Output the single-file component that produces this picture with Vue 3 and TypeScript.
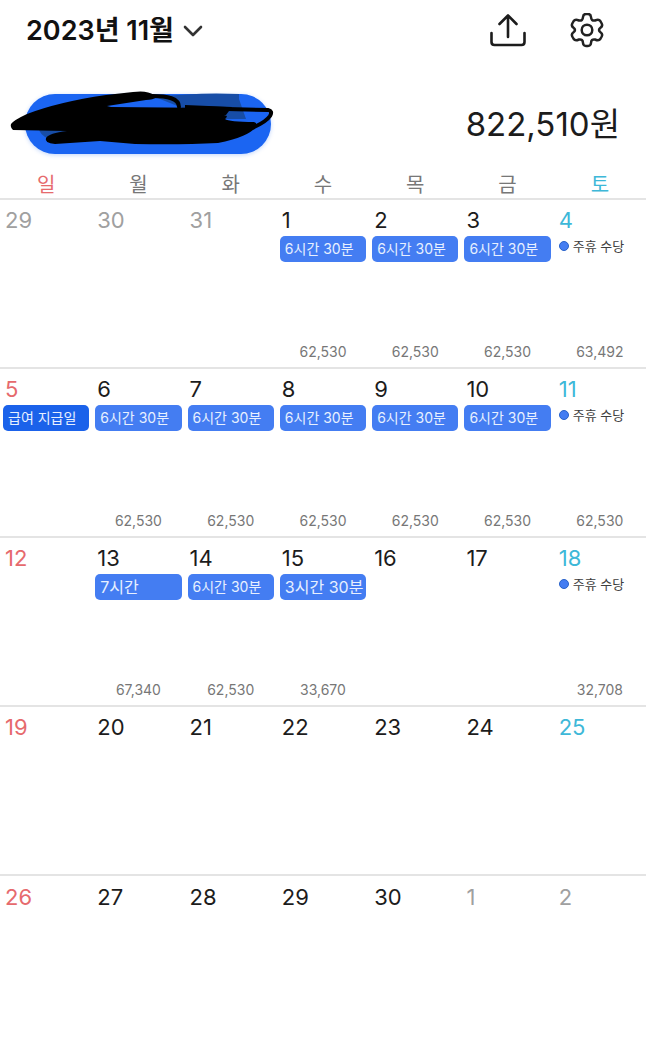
<script setup lang="ts">
interface Day {
  date: number
  outside?: boolean
  work?: string
  large?: boolean
  payday?: boolean
  holiday?: boolean
  amount?: string
}

const weekdays: string[] = ['일', '월', '화', '수', '목', '금', '토']
const shift = '6시간 30분'
const pay = '62,530'

const weeks: Day[][] = [
  [
    { date: 29, outside: true },
    { date: 30, outside: true },
    { date: 31, outside: true },
    { date: 1, work: shift, amount: pay },
    { date: 2, work: shift, amount: pay },
    { date: 3, work: shift, amount: pay },
    { date: 4, holiday: true, amount: '63,492' },
  ],
  [
    { date: 5, work: '급여 지급일', payday: true },
    { date: 6, work: shift, amount: pay },
    { date: 7, work: shift, amount: pay },
    { date: 8, work: shift, amount: pay },
    { date: 9, work: shift, amount: pay },
    { date: 10, work: shift, amount: pay },
    { date: 11, holiday: true, amount: pay },
  ],
  [
    { date: 12 },
    { date: 13, work: '7시간', large: true, amount: '67,340' },
    { date: 14, work: shift, amount: pay },
    { date: 15, work: '3시간 30분', large: true, amount: '33,670' },
    { date: 16 },
    { date: 17 },
    { date: 18, holiday: true, amount: '32,708' },
  ],
  [19, 20, 21, 22, 23, 24, 25].map((date) => ({ date })),
  [26, 27, 28, 29, 30, 1, 2].map((date) => ({ date, outside: date < 3 })),
]
</script>

<template>
  <main class="page">
    <header class="topbar">
      <button class="month" type="button">
        <span>2023년 11월</span>
        <svg width="20" height="14" viewBox="0 0 20 14" aria-hidden="true">
          <path d="M2 3 10 11 18 3" fill="none" stroke="#333" stroke-width="2.6" stroke-linecap="round" stroke-linejoin="round" />
        </svg>
      </button>
      <div class="actions">
        <button class="icon" type="button" aria-label="공유">
          <svg width="38" height="36" viewBox="0 0 38 36" aria-hidden="true">
            <g fill="none" stroke="#1c1c1c" stroke-width="2.6" stroke-linecap="round" stroke-linejoin="round">
              <path d="M19 24V2.500M10.5 11 19 2.500 27.500 11" />
              <path d="M2.500 20V29Q2.500 32 5.500 32H32.500Q35.500 32 35.500 29V20" />
            </g>
          </svg>
        </button>
        <button class="icon" type="button" aria-label="설정">
          <svg width="34" height="36" viewBox="0 1 34 36" aria-hidden="true">
            <g fill="none" stroke="#222" stroke-width="2.5" stroke-linejoin="round">
              <path d="M13 5Q13.300 2 16 2H18Q20.700 2 21 5Q21.200 9.200 25 8.500Q28.800 6.800 30.300 9L31.700 11.500Q33 14 30.500 15.700Q27.500 18 30.500 20.300Q33 22 31.700 24.500L30.300 27Q28.800 29.200 25 27.500Q21.200 26.800 21 31Q20.700 34 18 34H16Q13.300 34 13 31Q12.800 26.800 9 27.500Q5.200 29.200 3.700 27L2.300 24.500Q1 22 3.500 20.300Q6.500 18 3.500 15.700Q1 14 2.300 11.500L3.700 9Q5.200 6.800 9 8.500Q12.800 9.200 13 5Z" />
              <circle cx="17" cy="18" r="5.300" />
            </g>
          </svg>
        </button>
      </div>
    </header>

    <section class="summary">
      <div class="workplace">
        <svg class="scribble" width="264" height="56" viewBox="0 0 264 56" aria-hidden="true">
          <path d="M145 6Q190 1 229 3V8L236 28 200 28Z" fill="#174da7" />
          <path d="M28 35H60V47H38Q30 45 28 35Z" fill="#174da7" />
          <path d="M1 33Q4 29 17 23Q48 11 96 4L123 1Q137-1 144 4L147 6Q143 9 136 9L97 15 101 16 211 17V23L217 25Q216 28 215 28 219 31 244 31L246 32 246 36Q238 46 208 52 170 54 125 53L90 50 45 53Q34 52 36 47 39 42 57 40L3 39Q0 36 1 33Z" fill="#000" />
          <path d="M138 5Q169 4 169 16M178 17 258 19Q263 20 260 25 256 31 242 37L218 45" fill="none" stroke="#000" stroke-width="4" stroke-linecap="round" stroke-linejoin="round" />
          <path d="M175 14 222 16 216 24 175 24Z" fill="#000" />
        </svg>
      </div>
      <strong class="total">822,510원</strong>
    </section>

    <table class="calendar">
      <thead>
        <tr>
          <th v-for="name in weekdays" :key="name" scope="col">{{ name }}</th>
        </tr>
      </thead>
      <tbody>
        <tr v-for="(week, index) in weeks" :key="index">
          <td v-for="day in week" :key="day.date">
            <div class="cell">
              <span class="date" :class="{ outside: day.outside }">{{ day.date }}</span>
              <span v-if="day.work" class="chip" :class="{ large: day.large, payday: day.payday }">{{ day.work }}</span>
              <span v-if="day.holiday" class="note"><i class="dot"></i>주휴 수당</span>
              <span v-if="day.amount" class="amount">{{ day.amount }}</span>
            </div>
          </td>
        </tr>
      </tbody>
    </table>
  </main>
</template>

<style>
body {
  background: #fff;
  overflow-x: hidden;
}
</style>

<style scoped>
.page {
  height: 100vh;
  overflow: hidden;
  color: #1c1c1c;
  background: #fff;
  font-family: Inter, "Noto Sans CJK KR", sans-serif;
}
.page * {
  box-sizing: border-box;
}
button {
  display: flex;
  align-items: center;
  padding: 0;
  border: 0;
  background: none;
  color: inherit;
  font: inherit;
}
.topbar {
  display: flex;
  justify-content: space-between;
  align-items: center;
  height: 62px;
  padding: 0 42px 0 26px;
}
.month {
  gap: 9px;
  color: #111;
  font-size: 27px;
  font-weight: 600;
  line-height: 36px;
}
.actions {
  display: flex;
  gap: 43px;
}
.summary {
  display: flex;
  justify-content: space-between;
  height: 108px;
  padding: 32px 26px 0 25px;
}
.workplace {
  position: relative;
  width: 246px;
  height: 60px;
  border-radius: 30px;
  background: #1b65f2;
  box-shadow: 0 1px 4px #1b65f244;
}
.scribble {
  position: absolute;
  top: -3px;
  left: -15px;
  overflow: visible;
}
.total {
  font-size: 33px;
  font-weight: 400;
  line-height: 60px;
}
.calendar {
  width: 100%;
  table-layout: fixed;
  border-collapse: collapse;
}
th {
  height: 28px;
  padding: 2px 0 0;
  color: #777;
  font-size: 20px;
  font-weight: 400;
  line-height: 26px;
}
td {
  height: 169px;
  padding: 0;
  border-top: 2px solid #e4e4e4;
}
.cell {
  display: flex;
  flex-direction: column;
  height: 167px;
  padding: 5px 3px;
}
.date {
  padding-left: 2px;
  font-size: 22px;
  line-height: 31px;
}
th:first-child,
td:first-child .date {
  color: #e66a6d;
}
th:last-child,
td:last-child .date {
  color: #3eb8d8;
}
td .date.outside,
td:first-child .date.outside,
td:last-child .date.outside {
  color: #a0a0a0;
}
.chip {
  height: 26px;
  padding-left: 5px;
  border-radius: 5px;
  background: #447df2;
  color: #e7f0ff;
  font-size: 14px;
  line-height: 26px;
  white-space: nowrap;
}
.chip.large {
  font-size: 16px;
}
.chip.payday {
  background: #1b62ea;
}
.note {
  display: flex;
  align-items: center;
  gap: 4px;
  padding-left: 2px;
  color: #3d3d3d;
  font-size: 13px;
  line-height: 20px;
  white-space: nowrap;
}
.dot {
  width: 10px;
  height: 10px;
  border: 1px solid #2862c9;
  border-radius: 50%;
  background: #447df2;
}
.amount {
  margin-top: auto;
  color: #777;
  font-size: 14px;
  line-height: 20px;
  text-align: center;
}
</style>
